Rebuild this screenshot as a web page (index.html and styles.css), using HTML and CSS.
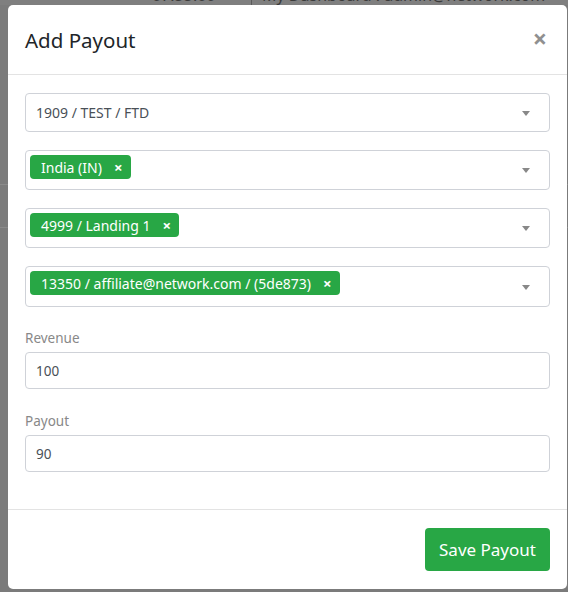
FILE: index.html
```html
<!DOCTYPE html>
<html>
<head>
<meta charset="utf-8">
<link rel="stylesheet" href="styles.css">
</head>
<body>
<div class="page">
  <div class="topbar">
    <span class="time">07:55:00</span>
    <span class="sep"></span>
    <span class="who">My Dashboard : admin@network.com</span>
  </div>
  <div class="rows">
    <div class="row"></div>
    <div class="row"></div>
  </div>
</div>

<div class="modal">
  <div class="modal-header">
    <h4 class="modal-title">Add Payout</h4>
    <span class="close">&times;</span>
  </div>
  <div class="modal-body">
    <div class="select single">
      <span class="value">1909 / TEST / FTD</span>
      <span class="arrow"></span>
    </div>
    <div class="select multi">
      <span class="tag">India (IN)<span class="x">&times;</span></span>
      <span class="arrow"></span>
    </div>
    <div class="select multi">
      <span class="tag">4999 / Landing 1<span class="x">&times;</span></span>
      <span class="arrow"></span>
    </div>
    <div class="select multi">
      <span class="tag">13350 / affiliate@network.com / (5de873)<span class="x">&times;</span></span>
      <span class="arrow"></span>
    </div>
    <div class="group">
      <label class="label">Revenue</label>
      <div class="input">100</div>
    </div>
    <div class="group">
      <label class="label">Payout</label>
      <div class="input">90</div>
    </div>
  </div>
  <div class="modal-footer">
    <button class="btn">Save Payout</button>
  </div>
</div>
</body>
</html>
```
FILE: styles.css
```css
* { box-sizing: border-box; }
html, body { margin: 0; padding: 0; }
body {
  width: 568px;
  height: 592px;
  overflow: hidden;
  background: #7b7b7b;
  font-family: "Noto Sans", "Open Sans", sans-serif;
  position: relative;
}
.page { position: relative; }
.topbar {
  height: 5px;
  overflow: hidden;
  position: relative;
  background: #7f7f7f;
}
.topbar .time,
.topbar .who {
  position: absolute;
  top: -13px;
  font-size: 16px;
  color: #3b3b3b;
  line-height: 16px;
}
.topbar .time { left: 152px; }
.topbar .who { left: 262px; }
.topbar .sep {
  position: absolute;
  left: 251px;
  top: 0;
  width: 1px;
  height: 5px;
  background: #5a5a5a;
}
.rows { padding-top: 179px; }
.row {
  height: 43px;
  border-top: 1px solid #8a8a8a;
}

.modal {
  position: absolute;
  left: 8px;
  top: 5px;
  width: 559px;
  height: 584px;
  background: #fff;
  border-radius: 5px;
  display: flex;
  flex-direction: column;
}
.modal-header {
  height: 70px;
  border-bottom: 1px solid #e3e3e3;
  display: flex;
  align-items: center;
  justify-content: space-between;
  padding: 0 20px 0 17px;
}
.modal-title {
  margin: 0;
  font-size: 20.5px;
  font-weight: 400;
  color: #212529;
  padding-top: 1px;
}
.close {
  font-size: 25px;
  font-weight: 700;
  color: #909090;
  line-height: 1;
  padding-bottom: 3px;
}
.modal-body {
  flex: 1;
  padding: 18px 17px 0 17px;
}
.select {
  position: relative;
  border: 1px solid #cfd2d8;
  border-radius: 4px;
  margin-bottom: 18px;
  display: flex;
  align-items: flex-start;
}
.select.single {
  height: 39px;
  align-items: center;
  padding-left: 10px;
}
.select.multi {
  height: 40px;
  padding: 4px 4px;
}
.select.multi:nth-child(4) { height: 41px; }
.value {
  font-size: 14px;
  color: #495057;
}
.arrow {
  position: absolute;
  right: 19px;
  top: 50%;
  margin-top: -2px;
  width: 0;
  height: 0;
  border-left: 4.5px solid transparent;
  border-right: 4.5px solid transparent;
  border-top: 5px solid #888;
}
.tag {
  display: inline-flex;
  align-items: center;
  height: 24px;
  background: #28a745;
  color: #fff;
  border-radius: 4px;
  font-size: 14px;
  padding: 0 8px 0 11px;
}
.tag .x {
  font-weight: 700;
  font-size: 15px;
  margin-left: 12px;
  line-height: 1;
}
.group { margin-bottom: 19px; }
.label {
  display: block;
  font-size: 13.5px;
  color: #888;
  line-height: 24px;
  margin-bottom: 2px;
  padding-top: 1px;
}
.input {
  height: 37px;
  border: 1px solid #cfd2d8;
  border-radius: 4px;
  font-size: 13.5px;
  color: #495057;
  display: flex;
  align-items: center;
  padding-left: 10px;
}
.modal-footer {
  border-top: 1px solid #e3e3e3;
  height: 80px;
  display: flex;
  justify-content: flex-end;
  align-items: flex-start;
  padding: 18px 17px 0 0;
}
.btn {
  height: 43px;
  width: 125px;
  border: none;
  border-radius: 4px;
  background: #28a745;
  color: #fff;
  font-family: inherit;
  font-size: 17px;
  padding: 0;
}
```
